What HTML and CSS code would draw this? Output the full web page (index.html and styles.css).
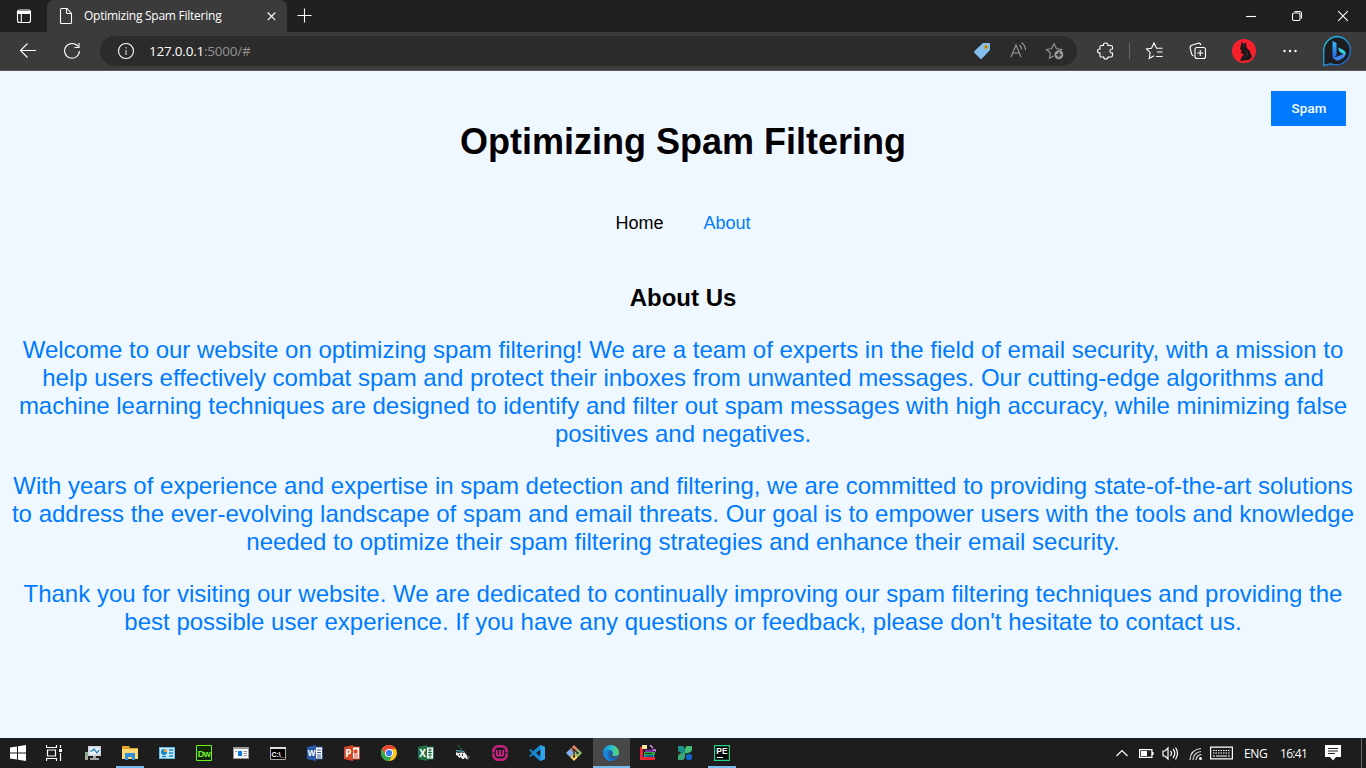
FILE: index.html
```html
<!DOCTYPE html>
<html lang="en">
<head>
<meta charset="utf-8">
<title>Optimizing Spam Filtering</title>
<link rel="stylesheet" href="styles.css">
</head>
<body>
<div class="tabs">
  <div class="tab-menu"><svg class="i24" viewBox="0 0 24 24"><rect x="5.5" y="6" width="13" height="12.5" rx="2"/><path d="M5.5 7.5h13v2h-13z" fill="#fff"/><path d="M9.3 9v9"/></svg></div>
  <div class="tab">
    <svg class="i24" viewBox="0 0 24 24"><path d="M7 4.5h6l4.500 5v9q0 1-1 1h-9q-1 0-1-1v-13q0-1 1-1zM12.500 4.500v4q0 1 1 1h4"/></svg>
    <span class="tab-title">Optimizing Spam Filtering</span>
    <svg class="i24 close" viewBox="0 0 24 24"><path d="M8.700 8.500l7.600 7.600M16.300 8.500l-7.600 7.600"/></svg>
  </div>
  <div class="new-tab"><svg class="i24" viewBox="0 0 24 24"><path d="M12.500 4.500v14M5.500 11.500h14"/></svg></div>
  <div class="win"><svg class="i24" viewBox="0 0 24 24"><path d="M7 12.500h10"/></svg></div>
  <div class="win"><svg class="i24" viewBox="0 0 24 24"><rect x="7.500" y="9" width="7.500" height="7.500" rx="1.500"/><path d="M9.500 7.500h5q2 0 2 2v5"/></svg></div>
  <div class="win"><svg class="i24" viewBox="0 0 24 24"><path d="M7.200 7.200l9.600 9.600M16.800 7.200l-9.600 9.600"/></svg></div>
</div>
<div class="toolbar">
  <div class="tool back"><svg class="i24" viewBox="0 0 24 24"><path d="M20 11.500H4.500M11.500 4.500l-7 7 7 7"/></svg></div>
  <div class="tool"><svg class="i24" viewBox="0 0 24 24"><path d="M18 7.500A7.400 7.400 0 1 0 19.400 12M19 4v4.500h-4.500"/></svg></div>
  <div class="address">
    <svg class="i24 info" viewBox="0 0 24 24"><circle cx="12" cy="12" r="7.500"/><path d="M12 11v5M12 8v1.500" stroke="#aaa" stroke-width="1.500"/></svg>
    <span class="url">127.0.0.1<span class="port">:5000/#</span></span>
    <svg class="i24 tag" viewBox="0 0 24 24"><path d="M13 4h6q1 0 1 1v6l-8 8.500q-1 1-2 0L4.500 14q-1-1 0-2z" fill="#83beec" stroke="none"/><circle cx="16" cy="8" r="1.500" fill="#555" stroke="#d6a520" stroke-width="1.300"/></svg>
    <svg class="i24 read" viewBox="0 0 24 24"><path d="M4 18L9 6l5 12M6 14h6.500M12.500 6q2 1.500 2 4.500M14.500 3.500q4 3 4 7.500"/></svg>
    <svg class="i24 star" viewBox="0 0 24 24"><path d="M10.500 17l-4 2.200.9-5.200-4-3.500 5-.8 2.600-5 2.600 5 5.200.8-1 1.500"/><circle cx="15.800" cy="15.800" r="4.500" fill="#999" stroke="none"/><path d="M15.800 13.300v5M13.300 15.800h5" stroke="#2b2b2b" stroke-width="1.500"/></svg>
  </div>
  <div class="tool ext"><svg class="i24" viewBox="0 0 24 24"><path d="M7 6.500h2.500q-.5-2.500 2.200-2.500t2.200 2.500H17q1.500 0 1.500 1.500v2q-2.500-.3-2.500 2t2.500 2v2.500q0 1.500-1.500 1.500h-3q0 2-2.200 2t-2.200-2H7q-1 0-1-1V14q-2.500 0-2.500-2T6 10V7.500q0-1 1-1z"/></svg></div>
  <div class="divider"></div>
  <div class="tool fav"><svg class="i24" viewBox="0 0 24 24"><path d="M11 16.800L6.200 19.500l1-5.800-3.700-3.800 5-.7L11 4l2.500 5.200h6M14 13H19.500M13 17.500H19.500"/></svg></div>
  <div class="tool coll"><svg class="i24" viewBox="0 0 24 24"><rect x="9" y="8.500" width="10.500" height="11" rx="2"/><path d="M14.250 11v6M11.250 14h6M7.500 17q-1.500-.5-2-2.500l-1.300-5Q3.700 7 5.700 6.200l6.300-2q2.300-.6 3 1.800"/></svg></div>
  <div class="tool avatar"><svg class="i24" viewBox="0 0 24 24"><circle cx="12" cy="12" r="12" fill="#fa202b" stroke="none"/><path d="M10 2l.8 2.500h2L14 3l.7 6 2.800 2.500L20 18l-3 3-9 1 2-4.500 2-2-3-1.500.5-3L8 10z" fill="#1d171a" stroke="none"/><path d="M10.500 7h2M13 12l3 3-4 4" stroke="#4d3f40" stroke-width=".8"/></svg></div>
  <div class="tool dots"><svg class="i24" viewBox="0 0 24 24"><g fill="#fff" stroke="none"><circle cx="6.500" cy="12" r="1.200"/><circle cx="12" cy="12" r="1.200"/><circle cx="17.500" cy="12" r="1.200"/></g></svg></div>
  <div class="tool bing"><svg viewBox="0 0 32 32" width="32" height="32"><defs><linearGradient id="bg" x2="1" y2="1"><stop stop-color="#1ccbe0"/><stop offset="1" stop-color="#2458db"/></linearGradient><linearGradient id="bb" x2="0" y2="1"><stop stop-color="#36bdf7"/><stop offset="1" stop-color="#2361e8"/></linearGradient></defs><path d="M16 1.500A14.200 14.200 0 1 1 9 28.800L1.800 30.500V16A14.300 14.300 0 0 1 16 1.500z" fill="#1d1d20" stroke="url(#bg)" stroke-width="1.300"/><path d="M10.500 6l4 2v12.500l-3.500 3-.5-1z" fill="url(#bb)"/><path d="M10.500 22.500l3 2.500q2 1 4 0l4.500-2.500q2-2 1.500-4.500L14 22z" fill="#3e83ee"/><path d="M16 12.500l5 2.300q3 1.800 2.700 5l-3.700-1.500-2.500-1.500z" fill="#35d3df"/></svg></div>
</div>

<main class="page">
  <button class="spam-button">Spam</button>
  <h1>Optimizing Spam Filtering</h1>
  <nav><a class="home">Home</a><a>About</a></nav>
  <section>
    <h2>About Us</h2>
    <p>Welcome to our website on optimizing spam filtering! We are a team of experts in the field of email security, with a mission to help users effectively combat spam and protect their inboxes from unwanted messages. Our cutting-edge algorithms and machine learning techniques are designed to identify and filter out spam messages with high accuracy, while minimizing false positives and negatives.</p>
    <p>With years of experience and expertise in spam detection and filtering, we are committed to providing state-of-the-art solutions to address the ever-evolving landscape of spam and email threats. Our goal is to empower users with the tools and knowledge needed to optimize their spam filtering strategies and enhance their email security.</p>
    <p>Thank you for visiting our website. We are dedicated to continually improving our spam filtering techniques and providing the best possible user experience. If you have any questions or feedback, please don't hesitate to contact us.</p>
  </section>
</main>

<footer class="taskbar">
  <div class="sys"><svg viewBox="0 0 16 16"><path d="M0 2.500l7-1v6H0zM8 1.300L16 0v7.500H8zM0 8.500h7v6l-7-1zM8 8.500h8V16l-8-1.200z" fill="#fff"/></svg></div>
  <div class="sys"><svg viewBox="0 0 16 16" fill="none" stroke="#fff"><path d="M.5 0v2.500h10V0M.5 16v-2.500h10V16M1.500 5h8v6h-8zM14.500 0v3M14.500 8v8" stroke-width="1.200"/><path d="M13 4h3v3h-3z" fill="#fff" stroke="none"/></svg></div>
  <div class="apps">
    <div class="app"><svg viewBox="0 0 16 16"><path d="M3 1h13v10H3z" fill="#d4d4d4"/><path d="M4.500 2.500h10v7h-10z" fill="#e3f4fc"/><path d="M5 6h2l2-2 3 4 2-3" fill="none" stroke="#1878b5" stroke-width="1.200"/><path d="M0 7h3v8H0zM8 11h3v2h3v2H5v-2h3z" fill="#a5a5a5"/><path d="M1 8h1v3H1z" fill="#51b44b"/></svg></div>
    <div class="app open"><svg viewBox="0 0 16 16"><path d="M0 1h7l1 2h8v11H0z" fill="#e7a529"/><path d="M0 4h16v10H0z" fill="#ffda74"/><path d="M3 8h10v7h-3v-3H6v3H3z" fill="#2f91dc"/></svg></div>
    <div class="app"><svg viewBox="0 0 16 16"><path d="M0 2h16v12H0z" fill="#67bce8"/><path d="M1 3h14v10H1z" fill="#c6e9fa"/><circle cx="5" cy="7" r="3" fill="#1686cc"/><path d="M5 7V4a3 3 0 0 1 3 3z" fill="#f0a22c"/><path d="M10 5h4M10 8h4M3 11.500h4M10 11h4" stroke="#158bcb" stroke-width="1.500"/></svg></div>
    <div class="app"><svg viewBox="0 0 16 16"><path d="M.5.500h15v15H.5z" fill="#102a08" stroke="#6bf31c"/><text x="8" y="11.500" class="dw">Dw</text></svg></div>
    <div class="app"><svg viewBox="0 0 16 16"><path d="M0 2h16v12H0z" fill="#999"/><path d="M1 4h14v9H1z" fill="#fafafa"/><path d="M5 6h4v5H5z" fill="#087bdc"/><path d="M10.500 6.500H14M10.500 8.500H14M10.500 10.500H14M2 6.500h2" stroke="#999"/></svg></div>
    <div class="app"><svg viewBox="0 0 16 16"><path d="M.5 2.500h15v12H.5z" fill="#000" stroke="#aaa"/><path d="M0 2h16v2H0z" fill="#ddd"/><text x="8" y="11.500" class="cmd">C:\_</text></svg></div>
    <div class="app"><svg viewBox="0 0 16 16"><path d="M8 2h7.500v12H8z" fill="#fff" stroke="#2b579a"/><path d="M10 5h4M10 7.500h4M10 10h4M10 12h4" stroke="#2b579a"/><path d="M0 2l9-2v16l-9-2z" fill="#2b5ba8"/><text x="4.500" y="11" class="office word">W</text></svg></div>
    <div class="app"><svg viewBox="0 0 16 16"><path d="M8 2h7.500v12H8z" fill="#fff" stroke="#d24625"/><path d="M10 10h4M10 12h4M10 5h3v3h-3z" stroke="#d24625" fill="#d24625"/><path d="M0 2l9-2v16l-9-2z" fill="#d24625"/><text x="4.500" y="11.500" class="office">P</text></svg></div>
    <div class="app"><svg viewBox="0 0 16 16"><circle cx="8" cy="8" r="8" fill="#fcc31e"/><path d="M1.100 4A8 8 0 0 1 15 4H8L4.500 10z" fill="#e94335"/><path d="M1.100 4L4.500 10 8 12l3.500-2L8 16A8 8 0 0 1 1.100 4z" fill="#30a852"/><circle cx="8" cy="8" r="4" fill="#fff"/><circle cx="8" cy="8" r="3.100" fill="#327cf3"/></svg></div>
    <div class="app"><svg viewBox="0 0 16 16"><path d="M8 2h7.500v12H8z" fill="#fff" stroke="#217346"/><path d="M10 5h4M10 7.500h4M10 10h4M12 3v10" stroke="#217346"/><path d="M0 2l9-2v16l-9-2z" fill="#217346"/><text x="4.500" y="11.500" class="office">X</text></svg></div>
    <div class="app"><svg viewBox="0 0 16 16"><path d="M1 7l2 1 3-.5 4 .5 2 2.500 1 3.500h-2l-1-2-1 2H7l-1-2-2 1-1-2-2-1z" fill="#eee"/><path d="M3 2l2-1.500M5 4l2-1" stroke="#238b3b"/><path d="M1 5.500l2 .5h4l3 1.500" stroke="#57d2df" fill="none"/><path d="M4.500 9v1.500M7.500 9v2" stroke="#222"/><path d="M13 15v-3h2" stroke="#777" fill="none"/></svg></div>
    <div class="app"><svg viewBox="0 0 16 16"><rect x="1.300" y="1.300" width="13.400" height="13.400" rx="5" fill="none" stroke="#c5237f" stroke-width="2.600"/><path d="M0 8h3M13 8h3" stroke="#1d1d1d"/><path d="M4.700 5v4q0 1.700 1.600 1.700T8 9V5v4q0 1.700 1.700 1.700T11.300 9V5" fill="none" stroke="#db268e" stroke-width="1.700"/></svg></div>
    <div class="app"><svg viewBox="0 0 16 16"><path d="M11 0l5 2v12l-5 2-7-6.200L1.500 12 0 11l3-3-3-3 1.500-1L4 6.200zM11.500 4.500L7 8l4.500 3.500z" fill="#1688ce" fill-rule="evenodd"/><path d="M11.500 0L16 2v12l-4.500 2z" fill="#30a5ed"/></svg></div>
    <div class="app"><svg viewBox="0 0 16 16"><path d="M8 0l4 4-4 4-4-4z" fill="#ef8265"/><path d="M4 4l4 4-4 4-4-4z" fill="#83aff2"/><path d="M12 4l4 4-4 4-4-4z" fill="#98c66e"/><path d="M8 8l4 4-4 4-4-4z" fill="#f9d66b"/><path d="M5 2l3 3v7M8 5l4 3" stroke="#333" stroke-width="1.200" fill="none"/><g fill="#333"><circle cx="8" cy="5" r="1.300"/><circle cx="11.500" cy="8" r="1.300"/><circle cx="8" cy="11.500" r="1.300"/></g></svg></div>
    <div class="app active"><svg viewBox="0 0 16 16"><defs><linearGradient id="edge" x2="1"><stop stop-color="#1595de"/><stop offset=".5" stop-color="#26bad1"/><stop offset="1" stop-color="#61d960"/></linearGradient></defs><circle cx="8" cy="8" r="8" fill="#1766b8"/><path d="M0 8a8 8 0 0 1 16 0q0 3-4 3-3 0-3-1.500l1-1.500Q9 5 6 5 2 5 0 8z" fill="url(#edge)"/><path d="M0 8q3-4 6-2-2 2-1 5 1 3 4 4.900A8 8 0 0 1 0 8z" fill="#1b83d7"/><path d="M9.500 7.500q-1.500 2 .5 3.500 2.500 1.500 5.500.2-3 2.300-6 1.300Q6.500 11 8 8z" fill="#484848"/></svg></div>
    <div class="app"><svg viewBox="0 0 16 16"><path d="M0 2h3v10h12v3H0z" fill="#ea2630"/><path d="M2 0h5v4H2z" fill="#ffe9a1"/><path d="M5 4h9v3H5z" fill="#7530a8"/><path d="M4 7h11v3H4z" fill="#2aaa43"/><path d="M4 10h10v2H4z" fill="#148fd0"/><path d="M10 0l3 3M13 5h3v2" stroke="#db8cf7" stroke-width="1.500" fill="none"/><path d="M5 8.500h7M6 11h7M5 4.500h7" stroke="#111" stroke-width=".7"/></svg></div>
    <div class="app"><svg viewBox="0 0 16 16"><path d="M1 1h5q2 1 2 7.300Q1 8 1 5z" fill="#1a918c"/><path d="M15 1v4q0 3-7.300 3.300Q8 1 10 1z" fill="#46bd75"/><path d="M1 15v-4q0-3 7.300-3.300Q8 15 6 15z" fill="#3ca775"/><circle cx="12" cy="12" r="3.200" fill="#1264c4"/></svg></div>
    <div class="app open"><svg viewBox="0 0 16 16"><path d="M.6.600h14.800v14.800H.6z" fill="#050505" stroke="#23d18b" stroke-width="1.200"/><text x="8" y="9" class="pe">PE</text><path d="M3 12.500h6" stroke="#fff"/></svg></div>
  </div>
  <div class="tray">
    <svg width="12" height="16" viewBox="0 0 12 16"><path d="M.5 11L6 5.500l5.500 5.500"/></svg>
    <svg class="battery" width="15" height="16" viewBox="0 0 15 16"><path d="M.6 4.600h12.300v7.800H.6zM14 7v3"/><path d="M2 6h6v5H2z" fill="#fff" stroke="none"/></svg>
    <svg class="sound" width="17" height="16" viewBox="0 0 17 16"><path d="M1 6h2l3-3v11l-3-3H1zM8.500 6q2 2 0 5M11 4q3.500 4 0 9M13.500 2.500q4 5.500 0 12"/></svg>
    <svg class="wifi" width="14" height="16" viewBox="0 0 14 16"><path d="M1 15Q1.500 4.500 12 3.500M4 15Q4.500 7.500 12 6.500M7 15q.5-5 5.500-5.500"/><circle cx="11.500" cy="13.500" r="1.500" fill="#fff" stroke="none"/></svg>
    <svg class="keyboard" width="23" height="16" viewBox="0 0 23 16"><path d="M.6 2.100h21.800v11.800H.6z"/><path d="M3 5.500h17M3 8h17" stroke-dasharray="1.500 1"/><path d="M3 11h2M6 11h11M18 11h2"/></svg>
    <span class="lang">ENG</span><span class="clock">16:41</span>
    <svg class="note" width="16" height="18" viewBox="0 0 16 18"><path d="M0 1h16v12h-5l-3 3.500L5 13H0z" fill="#fff" stroke="none"/><path d="M3 4.500h10M3 7h10M3 9.500h7" stroke="#222"/></svg>
  </div>
</footer>
</body>
</html>
```
FILE: styles.css
```css
* { box-sizing: border-box; }
body { margin: 0; height: 768px; display: flex; flex-direction: column; overflow: hidden; font-family: "Liberation Sans", sans-serif; background: #f0f8ff; }
svg { display: block; flex: none; }
.i24 { width: 24px; height: 24px; fill: none; stroke: #fff; stroke-width: 1.1; }
.tabs { height: 32px; flex: none; display: flex; align-items: center; background: #202020; }
.tab-menu { width: 47px; padding-left: 12px; }
.tab { width: 240px; height: 32px; display: flex; align-items: center; padding-left: 7px; background: #3b3b3b; border-radius: 7px 7px 0 0; }
.tab-title { width: 175px; margin-left: 6px; font: 12px/16px "Open Sans", sans-serif; letter-spacing: -0.25px; color: #fff; white-space: nowrap; }
.new-tab { padding-left: 5px; margin-right: auto; }
.win { width: 46px; display: flex; justify-content: center; }
.toolbar { height: 39px; flex: none; display: flex; align-items: center; background: #3b3b3b; border-bottom: 1px solid #5b5960; }
.tool { width: 44px; flex: none; display: flex; justify-content: center; }
.back { margin-left: 6px; }
.address { width: 977px; height: 30px; margin-left: 6px; padding-left: 14px; display: flex; align-items: center; background: #2b2b2b; border-radius: 15px; }
.url { margin-left: 11px; margin-right: auto; font: 13.500px/18px "Open Sans", sans-serif; letter-spacing: -0.22px; color: #fff; }
.port { color: #929292; }
.read { margin-left: 13px; stroke: #999; }
.star { margin: 0 10px 0 12px; stroke: #999; }
.ext { margin-left: 7px; }
.divider { width: 1px; height: 16px; margin-left: 1px; background: #666; }
.fav { margin-left: 3px; }
.coll { margin-left: -1px; }
.avatar { margin-left: 2px; }
.dots { margin-left: 2px; }
.bing { margin-left: 4px; }
.page { height: 667px; flex: none; text-align: center; background: #f0f8ff; position: relative; }
.spam-button { position: absolute; top: 20px; right: 20px; width: 75px; height: 35px; padding: 0; border: 0; background: #007bff; color: #fff; font: 500 13.333px Roboto, sans-serif; letter-spacing: .2px; text-indent: 1px; }
h1 { margin: 0; padding-top: 50px; font-size: 36px; line-height: 41px; }
nav { display: flex; justify-content: center; gap: 40px; margin-top: 51px; font-size: 18px; line-height: 20px; color: #007bff; }
.home { color: #000; }
section { padding: 0 10px; }
h2 { margin: 51px 0 24px; font-size: 24px; line-height: 28px; }
p { margin: 0 0 24px; font-size: 24px; line-height: 28px; color: #007bff; }
.taskbar { height: 30px; flex: none; display: flex; align-items: center; background: #1d1d1d; }
.sys { width: 36px; display: flex; justify-content: center; }
.sys svg, .app svg { width: 16px; height: 16px; }
.apps { display: flex; height: 30px; margin-left: 2.500px; }
.app { width: 37px; height: 30px; display: flex; align-items: center; justify-content: center; }
.open { background: linear-gradient(#76b9ed, #76b9ed) center bottom / 28px 2px no-repeat; }
.active { background: #484848; border-bottom: 2px solid #76b9ed; padding-top: 2px; }
.app text { text-anchor: middle; fill: #fff; font-family: "Open Sans", sans-serif; }
.app .dw { font: bold 9px "Liberation Sans", sans-serif; letter-spacing: -.4px; fill: #75f12b; }
.app .cmd { font: bold 7px "Liberation Sans", sans-serif; }
.app .office { font-size: 10px; font-weight: bold; }
.app .word { font-size: 8px; }
.app .pe { font: bold 8.500px "Liberation Sans", sans-serif; }
.tray { height: 30px; margin-left: auto; width: 250px; display: flex; align-items: center; color: #fff; font: 12px "Open Sans", sans-serif; }
.tray svg { fill: none; stroke: #fff; stroke-width: 1.200; }
.battery { margin-left: 11px; }
.sound { margin-left: 8px; }
.tray .wifi { margin-left: 10px; stroke: #ddd; }
.keyboard { margin-left: 7px; }
.lang { width: 24px; margin-left: 11px; letter-spacing: -.4px; }
.clock { width: 28px; margin-left: 12px; letter-spacing: -.7px; }
.note { margin-left: 17px; }
.tray::after { content: ""; width: 1px; height: 30px; margin-left: auto; margin-right: 4px; background: #666; }
```
